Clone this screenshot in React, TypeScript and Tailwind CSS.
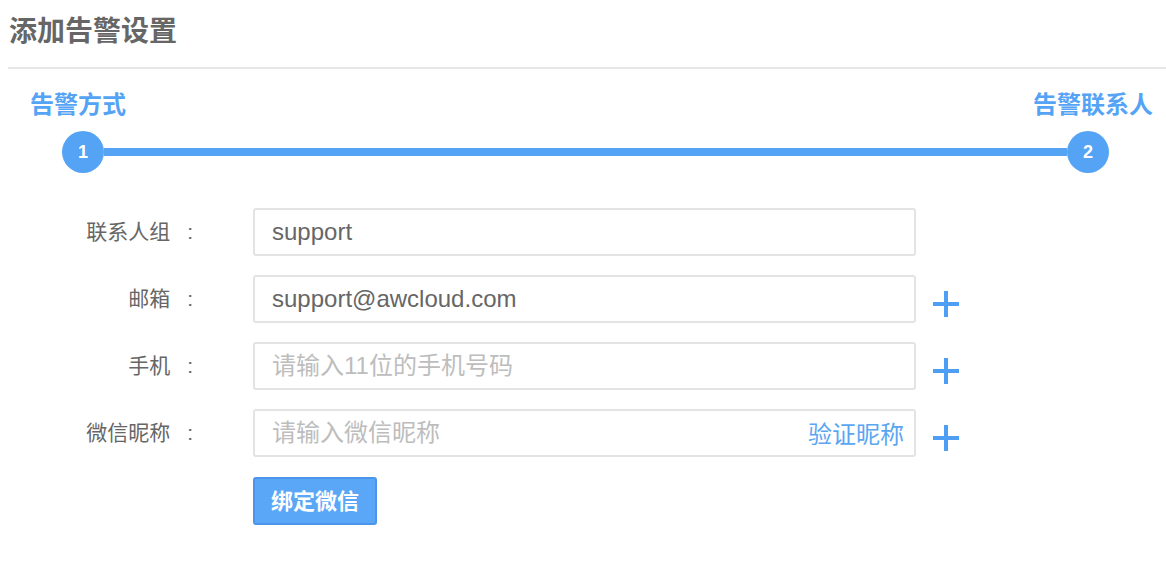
export default function App() {
    const font = { fontFamily: '"Liberation Sans", "Noto Sans CJK SC", sans-serif' }
    const rows = [
        { label: '联系人组', value: 'support', placeholder: '', plus: false, verify: false },
        { label: '邮箱', value: 'support@awcloud.com', placeholder: '', plus: true, verify: false },
        { label: '手机', value: '', placeholder: '请输入11位的手机号码', plus: true, verify: false },
        { label: '微信昵称', value: '', placeholder: '请输入微信昵称', plus: true, verify: true },
    ]

    return (
        <div className="w-[1166px] h-[566px] bg-white" style={font}>
            <h1 className="pl-[9px] pt-[12px] text-[28px] leading-[40px] font-bold text-[#666]">添加告警设置</h1>
            <div className="mt-[15px] ml-[8px] h-[2px] bg-[#e6e6e6]" />

            {/* steps */}
            <div className="pt-[20px] pl-[30px] pr-[13px] flex justify-between text-[24px] leading-[32px] font-bold text-[#55a3f5]">
                <span>告警方式</span>
                <span>告警联系人</span>
            </div>
            <div className="mt-[10px] pl-[62px] pr-[57px] flex items-center">
                <div className="w-[42px] h-[42px] rounded-full bg-[#55a3f5] flex items-center justify-center text-white font-bold text-[18px]">1</div>
                <div className="flex-1 h-[8px] bg-[#55a3f5]" />
                <div className="w-[42px] h-[42px] rounded-full bg-[#55a3f5] flex items-center justify-center text-white font-bold text-[18px]">2</div>
            </div>

            {/* form */}
            <form className="mt-[35px] flex flex-col gap-[19px]" onSubmit={(e) => e.preventDefault()}>
                {rows.map((r) => (
                    <div key={r.label} className="flex items-center">
                        <label className="w-[193px] flex justify-end text-[21px] text-[#666]">
                            <span>{r.label}</span>
                            <span className="ml-[17px]">:</span>
                        </label>
                        <div className="ml-[60px] relative w-[663px] h-[48px]">
                            <input
                                type="text"
                                defaultValue={r.value}
                                placeholder={r.placeholder}
                                className="w-full h-full border-2 border-[#e3e3e3] rounded-[3px] pl-[17px] text-[24px] text-[#666] placeholder:text-[#bdbdbd] outline-none"
                                style={font}
                            />
                            {r.verify && (
                                <span className="absolute right-[12px] top-0 h-full flex items-center pt-[4px] text-[24px] text-[#5aa6f3]">验证昵称</span>
                            )}
                        </div>
                        {r.plus && (
                            <svg className="ml-[17px] mt-[10px]" width="26" height="26" viewBox="0 0 26 26">
                                <rect x="0" y="11" width="26" height="4" fill="#4e9ff3" />
                                <rect x="11" y="0" width="4" height="26" fill="#4e9ff3" />
                            </svg>
                        )}
                    </div>
                ))}
                <div className="ml-[253px] mt-px">
                    <button type="button" className="w-[124px] h-[48px] bg-[#5aa7f7] border-2 border-[#4b95ea] rounded-[3px] text-white text-[22px] font-bold">绑定微信</button>
                </div>
            </form>
        </div>
    )
}
